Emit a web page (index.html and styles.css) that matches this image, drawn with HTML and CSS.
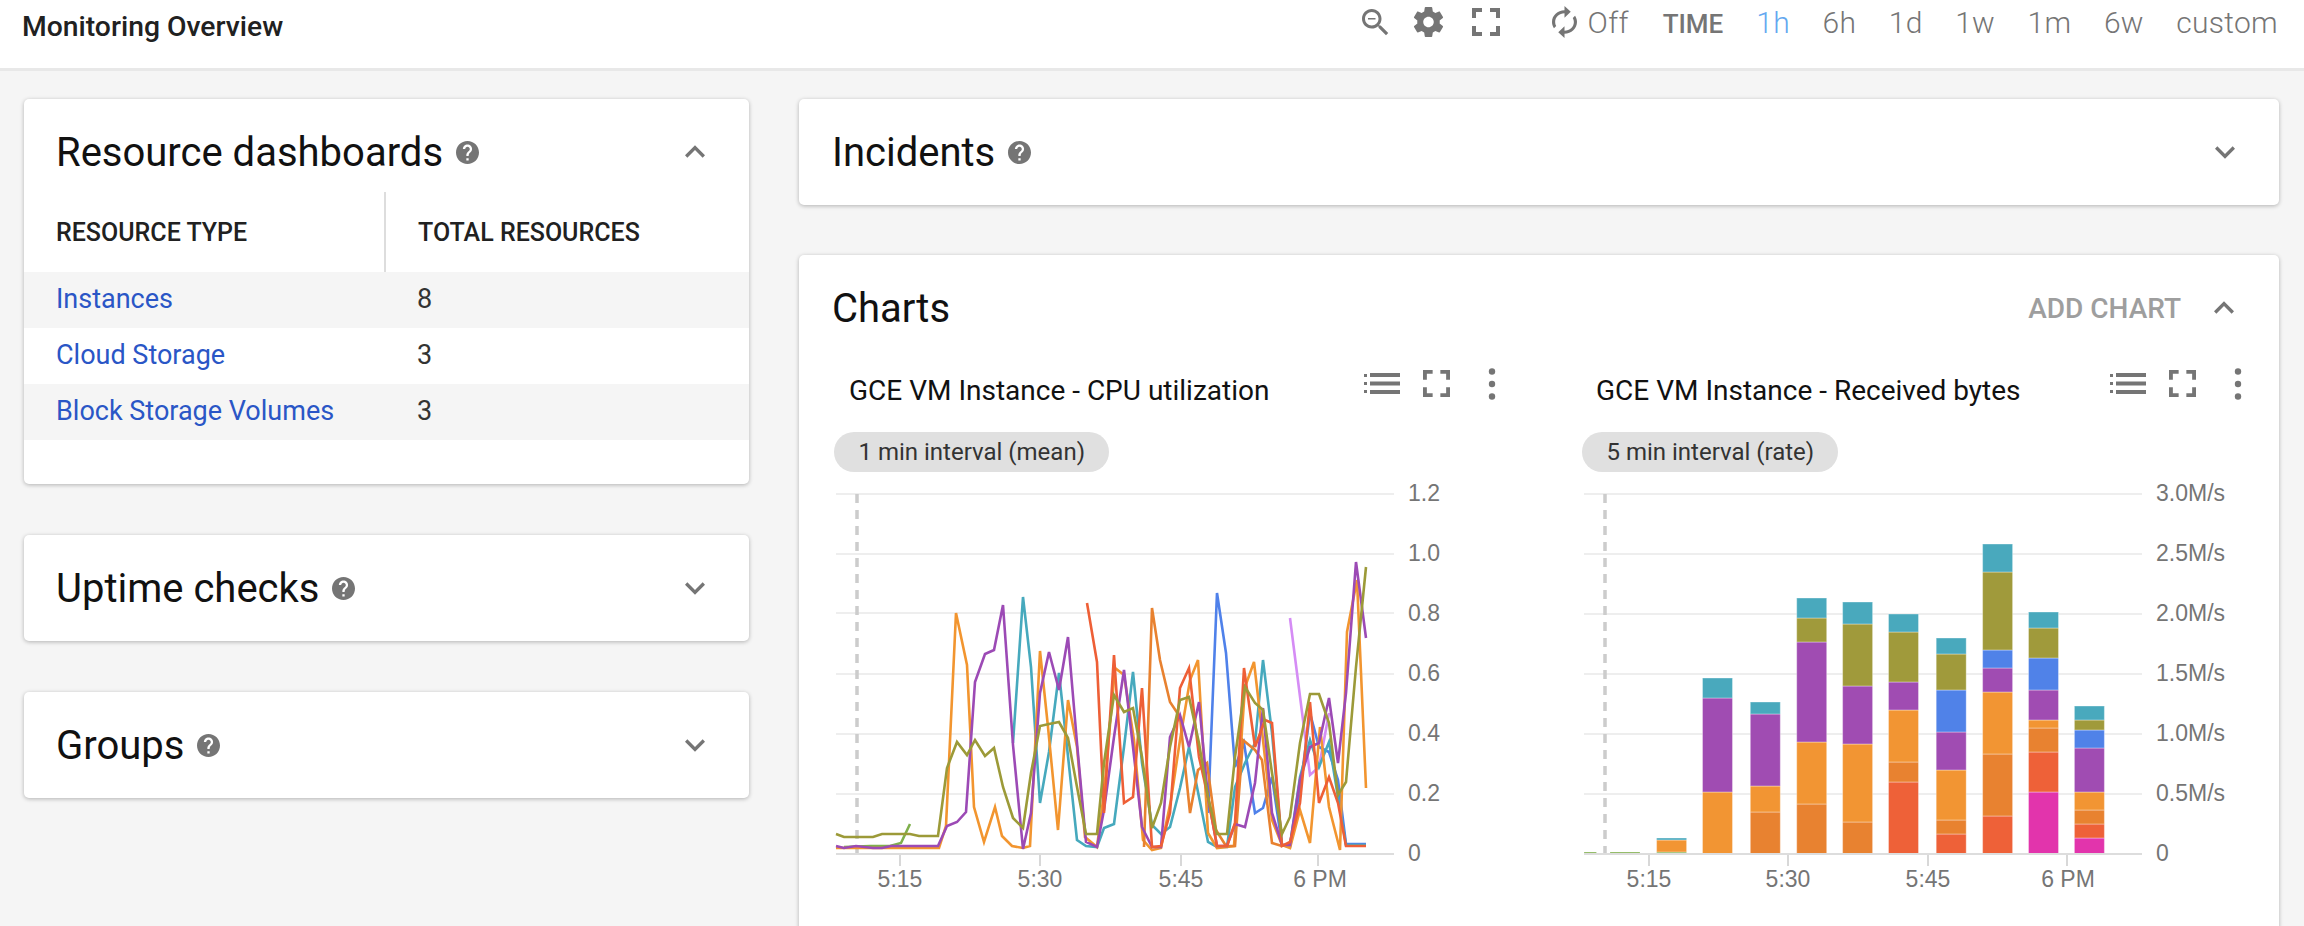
FILE: index.html
```html
<!DOCTYPE html>
<html lang="en">
<head>
<meta charset="UTF-8" />
<title>Monitoring Overview</title>
<link rel="stylesheet" href="styles.css">
</head>
<body>

<!-- Icon sprite -->
<svg class="sprite" aria-hidden="true">
  <symbol id="i-help" viewBox="2 2 20 20"><path d="M12 2C6.48 2 2 6.48 2 12s4.48 10 10 10 10-4.48 10-10S17.52 2 12 2zm1 17h-2v-2h2v2zm2.07-7.75l-.9.92C13.45 12.9 13 13.5 13 15h-2v-.5c0-1.1.45-2.1 1.17-2.83l1.24-1.26c.37-.36.59-.86.59-1.41 0-1.1-.9-2-2-2s-2 .9-2 2H8c0-2.21 1.79-4 4-4s4 1.79 4 4c0 .88-.36 1.68-.93 2.25z"/></symbol>
  <symbol id="i-less" viewBox="0 0 24 24"><path d="M12 8l-6 6 1.41 1.41L12 10.83l4.59 4.58L18 14z"/></symbol>
  <symbol id="i-more" viewBox="0 0 24 24"><path d="M16.59 8.59L12 13.17 7.41 8.59 6 10l6 6 6-6z"/></symbol>
  <symbol id="i-zoom" viewBox="3 3 18 18"><path d="M15.5 14h-.79l-.28-.27C15.41 12.59 16 11.11 16 9.5 16 5.91 13.09 3 9.5 3S3 5.91 3 9.5 5.91 16 9.5 16c1.61 0 3.09-.59 4.23-1.57l.27.28v.79l5 4.99L20.49 19l-4.99-5zm-6 0C7.01 14 5 11.99 5 9.5S7.01 5 9.5 5 14 7.01 14 9.5 11.99 14 9.5 14zM7 9h5v1H7z"/></symbol>
  <symbol id="i-gear" viewBox="2.4 2 19.2 20"><path d="M19.43 12.98c.04-.32.07-.64.07-.98s-.03-.66-.07-.98l2.11-1.65c.19-.15.24-.42.12-.64l-2-3.46c-.12-.22-.39-.3-.61-.22l-2.49 1c-.52-.4-1.08-.73-1.69-.98l-.38-2.65C14.46 2.18 14.25 2 14 2h-4c-.25 0-.46.18-.49.42l-.38 2.65c-.61.25-1.17.59-1.69.98l-2.49-1c-.23-.09-.49 0-.61.22l-2 3.46c-.13.22-.07.49.12.64l2.11 1.65c-.04.32-.07.65-.07.98s.03.66.07.98l-2.11 1.65c-.19.15-.24.42-.12.64l2 3.46c.12.22.39.3.61.22l2.49-1c.52.4 1.08.73 1.69.98l.38 2.65c.03.24.24.42.49.42h4c.25 0 .46-.18.49-.42l.38-2.65c.61-.25 1.17-.59 1.69-.98l2.49 1c.23.09.49 0 .61-.22l2-3.46c.12-.22.07-.49-.12-.64l-2.11-1.65zM12 15.5c-1.93 0-3.5-1.57-3.5-3.5s1.57-3.5 3.5-3.5 3.5 1.57 3.5 3.5-1.57 3.5-3.5 3.5z"/></symbol>
  <symbol id="i-full" viewBox="5 5 14 14"><path d="M7 14H5v5h5v-2H7v-3zm-2-4h2V7h3V5H5v5zm12 7h-3v2h5v-5h-2v3zM14 5v2h3v3h2V5h-5z"/></symbol>
  <symbol id="i-renew" viewBox="4 1 16 22" preserveAspectRatio="none"><path d="M12 6v3l4-4-4-4v3c-4.42 0-8 3.58-8 8 0 1.57.46 3.03 1.24 4.26L6.7 14.8c-.45-.83-.7-1.79-.7-2.8 0-3.31 2.69-6 6-6zm6.76 1.74L17.3 9.2c.44.84.7 1.79.7 2.8 0 3.31-2.69 6-6 6v-3l-4 4 4 4v-3c4.42 0 8-3.58 8-8 0-1.57-.46-3.03-1.24-4.26z"/></symbol>
  <symbol id="i-list" viewBox="0 0 36 21"><path d="M0 1h3v3H0zM6 0h30v4H6zM0 9h3v3H0zM6 8.5h30v4H6zM0 17h3v3H0zM6 17h30v4H6z"/></symbol>
  <symbol id="i-dots" viewBox="0 0 12 32"><circle cx="6" cy="3.5" r="3.2"/><circle cx="6" cy="16" r="3.2"/><circle cx="6" cy="28.5" r="3.2"/></symbol>
</svg>

<header class="topbar">
  <h1 class="page-title">Monitoring Overview</h1>
  <div class="tools">
    <svg class="tool tool-zoom"><use href="#i-zoom"/></svg>
    <svg class="tool tool-gear"><use href="#i-gear"/></svg>
    <svg class="tool tool-full"><use href="#i-full"/></svg>
    <svg class="tool tool-renew"><use href="#i-renew"/></svg>
    <span class="range range-off">Off</span>
    <span class="time-label">TIME</span>
    <span class="range range-active">1h</span>
    <span class="range">6h</span>
    <span class="range">1d</span>
    <span class="range">1w</span>
    <span class="range">1m</span>
    <span class="range">6w</span>
    <span class="range">custom</span>
  </div>
</header>

<main class="layout">
  <div class="col-left">
    <section class="card card-open">
      <div class="card-head">
        <h2>Resource dashboards</h2>
        <svg class="help"><use href="#i-help"/></svg>
        <svg class="chev"><use href="#i-less"/></svg>
      </div>
      <table class="res-table">
        <thead>
          <tr><th>RESOURCE TYPE</th><th>TOTAL RESOURCES</th></tr>
        </thead>
        <tbody>
          <tr><td><a href="#">Instances</a></td><td>8</td></tr>
          <tr><td><a href="#">Cloud Storage</a></td><td>3</td></tr>
          <tr><td><a href="#">Block Storage Volumes</a></td><td>3</td></tr>
        </tbody>
      </table>
    </section>

    <section class="card">
      <div class="card-head">
        <h2>Uptime checks</h2>
        <svg class="help"><use href="#i-help"/></svg>
        <svg class="chev"><use href="#i-more"/></svg>
      </div>
    </section>

    <section class="card">
      <div class="card-head">
        <h2>Groups</h2>
        <svg class="help"><use href="#i-help"/></svg>
        <svg class="chev"><use href="#i-more"/></svg>
      </div>
    </section>
  </div>

  <div class="col-right">
    <section class="card">
      <div class="card-head">
        <h2>Incidents</h2>
        <svg class="help"><use href="#i-help"/></svg>
        <svg class="chev"><use href="#i-more"/></svg>
      </div>
    </section>

    <section class="card card-charts">
      <div class="card-head">
        <h2>Charts</h2>
        <span class="add-chart">ADD CHART</span>
        <svg class="chev"><use href="#i-less"/></svg>
      </div>

      <div class="charts">
        <!-- CPU utilization -->
        <div class="chart chart-cpu">
          <div class="chart-head">
            <h3>GCE VM Instance - CPU utilization</h3>
            <svg class="ci-list"><use href="#i-list"/></svg>
            <svg class="ci-full"><use href="#i-full"/></svg>
            <svg class="ci-dots"><use href="#i-dots"/></svg>
          </div>
          <span class="pill">1 min interval (mean)</span>
          <svg class="plot plot-cpu" viewBox="834 480 744 446">
            <g class="grid">
              <path d="M836 494H1394M836 554H1394M836 613H1394M836 674H1394M836 734H1394M836 794H1394"/>
            </g>
            <path class="marker" d="M857 494V854"/>
            <path class="axis" d="M836 854H1394"/>
            <path class="tick" d="M900 855V866M1040 855V866M1181 855V866M1318 855V866"/>
            <g class="ylab">
              <text x="1408" y="501">1.2</text>
              <text x="1408" y="561">1.0</text>
              <text x="1408" y="621">0.8</text>
              <text x="1408" y="681">0.6</text>
              <text x="1408" y="741">0.4</text>
              <text x="1408" y="801">0.2</text>
              <text x="1408" y="861">0</text>
            </g>
            <g class="xlab">
              <text x="900" y="887">5:15</text>
              <text x="1040" y="887">5:30</text>
              <text x="1181" y="887">5:45</text>
              <text x="1320" y="887">6 PM</text>
            </g>
            <g class="lines">
              <polyline class="l-green" points="844,847 870,846 890,846 901,843 910,824"/>
              <polyline class="l-lilac" points="1290,618 1310,775 1319,767 1329,713"/>
              <polyline class="l-blue" points="1208,813 1217,593 1226,653 1235,767 1244,743 1255,813 1263,808 1272,777 1282,845 1290,847 1300,790 1310,713 1319,747 1329,752 1338,780 1346,844 1366,844"/>
              <polyline class="l-teal" points="1013,743 1023,597 1031,667 1040,803 1049,752 1059,673 1067,747 1077,840 1086,846 1097,847 1104,828 1114,824 1124,747 1133,672 1142,763 1152,825 1161,834 1170,827 1180,788 1189,747 1199,797 1208,842 1217,847 1227,847 1235,787 1245,763 1255,743 1263,660 1272,733 1282,845 1290,845 1300,777 1310,740 1319,767 1329,742 1338,797 1346,845 1366,845"/>
              <polyline class="l-orange" points="836,848 939,848 946,826 956,613 967,665 974,807 984,842 995,807 1002,836 1012,846 1023,848 1030,846 1040,651 1048,727 1058,830 1068,700 1077,747 1085,837 1097,847 1104,793 1115,668 1124,675 1134,740 1143,840 1152,850 1161,848 1171,800 1180,740 1190,680 1198,660 1208,833 1217,848 1234,846 1245,687 1254,662 1263,740 1272,820 1282,845 1290,848 1300,810 1310,843 1320,727 1329,807 1340,850 1347,632 1357,580 1366,788"/>
              <polyline class="l-dkorange" points="1144,847 1152,608 1160,660 1170,702 1180,717 1190,813 1198,770 1207,763 1216,830 1226,846 1235,846 1243,740 1255,750 1262,760 1272,843 1282,846"/>
              <polyline class="l-purple" points="836,846 844,848 856,846 873,848 882,848 891,846 938,846 947,826 957,822 966,812 975,682 985,654 994,650 1003,605 1013,745 1023,849 1031,813 1040,693 1049,652 1059,690 1068,637 1077,743 1086,842 1097,847 1104,810 1114,737 1124,670 1133,747 1142,827 1152,847 1161,847 1170,737 1180,715 1189,747 1199,702 1208,797 1217,846 1227,846 1235,824 1245,827 1255,783 1263,708 1272,813 1282,845 1290,845 1300,780 1310,747 1319,743 1329,698 1338,763 1346,693 1356,562 1366,638"/>
              <polyline class="l-red" points="1087,603 1097,662 1104,813 1114,655 1124,803 1133,797 1142,688 1152,847 1161,846 1170,813 1180,688 1189,668 1199,757 1208,797 1217,846 1227,846 1235,823 1244,668 1255,747 1265,720 1272,723 1282,846 1290,842 1300,803 1310,702 1319,803 1329,777 1338,803 1346,846 1366,846"/>
              <polyline class="l-olive" points="836,834 844,837 873,837 882,834 910,834 919,836 938,836 947,768 957,742 967,755 975,740 985,756 994,748 1003,787 1013,818 1023,828 1031,773 1040,726 1049,724 1059,722 1068,738 1077,787 1086,834 1097,834 1104,763 1114,695 1124,712 1133,708 1142,757 1152,828 1161,803 1170,747 1180,700 1189,697 1199,743 1208,797 1217,834 1227,834 1235,757 1245,687 1255,703 1263,710 1272,773 1282,834 1290,817 1300,743 1310,694 1319,694 1329,723 1338,795 1346,782 1356,667 1366,567"/>
            </g>
          </svg>
        </div>

        <!-- Received bytes -->
        <div class="chart chart-bytes">
          <div class="chart-head">
            <h3>GCE VM Instance - Received bytes</h3>
            <svg class="ci-list"><use href="#i-list"/></svg>
            <svg class="ci-full"><use href="#i-full"/></svg>
            <svg class="ci-dots"><use href="#i-dots"/></svg>
          </div>
          <span class="pill">5 min interval (rate)</span>
          <svg class="plot plot-bytes" viewBox="1582 480 696 446">
            <g class="grid">
              <path d="M1584 494H2142M1584 554H2142M1584 614H2142M1584 674H2142M1584 734H2142M1584 794H2142"/>
            </g>
            <path class="marker" d="M1605 494V854"/>
            <g class="bars">
              <rect class="s-green" x="1584" y="852" height="2" style="width:12.5px"/>
              <g transform="translate(1610 0)"><rect class="s-green" y="852" height="2"/></g>
              <g transform="translate(1656.6 0)">
                <rect class="s-green" y="852" height="2"/><rect class="s-orange" y="840" height="12"/><rect class="s-teal" y="838" height="2"/>
              </g>
              <g transform="translate(1702.5 0)">
                <rect class="s-orange" y="792" height="62"/><rect class="s-purple" y="698" height="94"/><rect class="s-teal" y="678" height="20"/>
              </g>
              <g transform="translate(1750.3 0)">
                <rect class="s-dkorange" y="812" height="42"/><rect class="s-orange" y="786" height="26"/><rect class="s-purple" y="714" height="72"/><rect class="s-teal" y="702" height="12"/>
              </g>
              <g transform="translate(1796.7 0)">
                <rect class="s-dkorange" y="804" height="50"/><rect class="s-orange" y="742" height="62"/><rect class="s-purple" y="642" height="100"/><rect class="s-olive" y="618" height="24"/><rect class="s-teal" y="598" height="20"/>
              </g>
              <g transform="translate(1842.6 0)">
                <rect class="s-dkorange" y="822" height="32"/><rect class="s-orange" y="744" height="78"/><rect class="s-purple" y="686" height="58"/><rect class="s-olive" y="624" height="62"/><rect class="s-teal" y="602" height="22"/>
              </g>
              <g transform="translate(1888.5 0)">
                <rect class="s-red" y="782" height="72"/><rect class="s-dkorange" y="762" height="20"/><rect class="s-orange" y="710" height="52"/><rect class="s-purple" y="682" height="28"/><rect class="s-olive" y="632" height="50"/><rect class="s-teal" y="614" height="18"/>
              </g>
              <g transform="translate(1936.2 0)">
                <rect class="s-red" y="834" height="20"/><rect class="s-dkorange" y="820" height="14"/><rect class="s-orange" y="770" height="50"/><rect class="s-purple" y="732" height="38"/><rect class="s-blue" y="690" height="42"/><rect class="s-olive" y="654" height="36"/><rect class="s-teal" y="638" height="16"/>
              </g>
              <g transform="translate(1982.6 0)">
                <rect class="s-red" y="816" height="38"/><rect class="s-dkorange" y="754" height="62"/><rect class="s-orange" y="692" height="62"/><rect class="s-purple" y="668" height="24"/><rect class="s-blue" y="650" height="18"/><rect class="s-olive" y="572" height="78"/><rect class="s-teal" y="544" height="28"/>
              </g>
              <g transform="translate(2028.5 0)">
                <rect class="s-magenta" y="792" height="62"/><rect class="s-red" y="752" height="40"/><rect class="s-dkorange" y="728" height="24"/><rect class="s-orange" y="720" height="8"/><rect class="s-purple" y="690" height="30"/><rect class="s-blue" y="658" height="32"/><rect class="s-olive" y="628" height="30"/><rect class="s-teal" y="612" height="16"/>
              </g>
              <g transform="translate(2074.4 0)">
                <rect class="s-magenta" y="838" height="16"/><rect class="s-red" y="824" height="14"/><rect class="s-dkorange" y="810" height="14"/><rect class="s-orange" y="792" height="18"/><rect class="s-purple" y="748" height="44"/><rect class="s-blue" y="730" height="18"/><rect class="s-olive" y="720" height="10"/><rect class="s-teal" y="706" height="14"/>
              </g>
            </g>
            <path class="axis" d="M1584 854H2142"/>
            <path class="tick" d="M1649 855V866M1788 855V866M1928 855V866M2067 855V866"/>
            <g class="ylab">
              <text x="2156" y="501">3.0M/s</text>
              <text x="2156" y="561">2.5M/s</text>
              <text x="2156" y="621">2.0M/s</text>
              <text x="2156" y="681">1.5M/s</text>
              <text x="2156" y="741">1.0M/s</text>
              <text x="2156" y="801">0.5M/s</text>
              <text x="2156" y="861">0</text>
            </g>
            <g class="xlab">
              <text x="1649" y="887">5:15</text>
              <text x="1788" y="887">5:30</text>
              <text x="1928" y="887">5:45</text>
              <text x="2068" y="887">6 PM</text>
            </g>
          </svg>
        </div>
      </div>
    </section>
  </div>
</main>

</body>
</html>
```

FILE: styles.css
```css
/* Basic Reset */
* {
  margin: 0; padding: 0; box-sizing: border-box;
}
html, body {
  height: 926px;
  overflow: hidden;
}
body {
  font-family: Roboto, 'Liberation Sans', sans-serif;
  background: #f5f5f5;
  color: #212121;
}
.sprite {
  display: none;
}
svg {
  fill: #757575;
  flex: none;
}
/* Top bar */
.topbar {
  height: 71px;
  background: #fff;
  border-bottom: 3px solid #e8e8e8;
  display: flex;
  justify-content: space-between;
  padding: 0 26px 0 22px;
}
.page-title {
  font-size: 28.3px;
  font-weight: 500;
  line-height: 53px;
}
.tools {
  display: flex;
  align-items: center;
  height: 44px;
  color: #757575;
}
.tool-zoom { width: 27px; height: 27px; }
.tool-gear { width: 31px; height: 30px; margin-left: 24px; }
.tool-full { width: 28px; height: 28px; margin-left: 28px; }
.tool-renew { width: 25px; height: 32px; margin-left: 52px; }
.range {
  font-size: 30px;
  font-weight: 300;
  letter-spacing: 0.3px;
  margin-left: 32.5px;
}
.range-off { margin-left: 11px; }
.range-active { color: #64a8f0; margin-left: 33px; }
.time-label {
  font-size: 26px;
  font-weight: 500;
  margin: 3px 0 0 34px;
}
/* Page columns */
.layout {
  display: grid;
  grid-template-columns: 725px 1480px;
  column-gap: 50px;
  padding: 28px 25px 0 24px;
}
.col-left, .col-right {
  display: flex;
  flex-direction: column;
  gap: 50px;
}
.col-left {
  gap: 51px;
}
.card {
  background: #fff;
  border-radius: 5px;
  box-shadow: 0 1px 4px rgba(0,0,0,0.28);
}
.card-head {
  height: 106px;
  display: flex;
  align-items: center;
  padding: 0 34px 0 32px;
}
.col-right .card-head {
  padding-left: 33px;
}
.card-head h2 {
  font-size: 40px;
  font-weight: 400;
  color: #111;
}
.help {
  width: 23px;
  height: 23px;
  margin-left: 13px;
}
.chev {
  width: 40px;
  height: 40px;
  margin-left: auto;
}
.add-chart {
  font-size: 28px;
  font-weight: 500;
  color: #9e9e9e;
  margin-left: auto;
}
.add-chart + .chev {
  margin-left: 23px;
  margin-right: 1px;
}
/* Resource table */
.card-open {
  height: 385px;
}
.card-open .card-head {
  height: 93px;
  padding-top: 13px;
}
.res-table {
  width: 100%;
  border-collapse: collapse;
  table-layout: fixed;
}
.res-table th {
  height: 80px;
  text-align: left;
  font-size: 25px;
  font-weight: 500;
  padding-left: 32px;
}
.res-table th:first-child {
  width: 361px;
  border-right: 2px solid #ddd;
}
.res-table td {
  height: 56px;
  font-size: 27px;
  padding: 0 0 2px 32px;
  color: #333;
}
.res-table tbody tr:nth-child(odd) {
  background: #f5f5f5;
}
.res-table a {
  color: #2a56c6;
  text-decoration: none;
}
/* Charts */
.card-charts {
  height: 700px;
}
.charts {
  display: grid;
  grid-template-columns: 748px 696px;
  padding-left: 35px;
}
.chart-head {
  height: 71px;
  display: flex;
  padding: 0 0 0 15px;
  align-items: flex-start;
}
.chart-head h3 {
  font-size: 28px;
  font-weight: 400;
  color: #111;
  line-height: 60px;
}
.ci-list { width: 36px; height: 21px; margin: 12px 0 0 auto; }
.ci-full { width: 27px; height: 27px; margin: 9px 0 0 23px; }
.ci-dots { width: 12px; height: 32px; margin: 7px 0 0 36px; }
.chart-cpu .chart-head { padding-right: 84px; }
.chart-bytes .chart-head { padding: 0 34px 0 14px; }
.pill {
  display: inline-block;
  height: 40px;
  line-height: 40px;
  padding: 0 23.5px 0 24.5px;
  border-radius: 20px;
  background: #e0e0e0;
  font-size: 24px;
  color: #333;
}
.plot {
  display: block;
  margin-top: 8px;
  width: 100%;
  height: 446px;
  fill: none;
}
.chart-cpu .plot { width: 744px; }
.grid path { stroke: #eee; stroke-width: 2; }
.axis { stroke: #ddd; stroke-width: 2; }
.tick { stroke: #ccc; stroke-width: 1.5; }
.marker { stroke: #ccc; stroke-width: 3.5; stroke-dasharray: 9 7; }
.ylab text, .xlab text {
  font-family: 'Liberation Sans', Arial, sans-serif;
  font-size: 23px;
  fill: #757575;
}
.xlab text { text-anchor: middle; }
.lines polyline {
  fill: none;
  stroke-width: 2.6;
  stroke-linejoin: miter;
}
.l-green { stroke: #7fb04c; }
.l-lilac { stroke: #d58cf5; }
.l-blue { stroke: #4f81ea; }
.l-teal { stroke: #46a9bd; }
.l-orange { stroke: #f2952f; }
.l-dkorange { stroke: #e8812f; }
.l-purple { stroke: #9c4ab5; }
.l-red { stroke: #ee5f36; }
.l-olive { stroke: #9c9a38; }
.bars rect {
  width: 30px;
  stroke: rgba(255,255,255,0.35);
  stroke-width: 1;
}
.s-green { fill: #7fb04c; }
.s-blue { fill: #5082e8; }
.s-teal { fill: #49a9bd; }
.s-orange { fill: #f29533; }
.s-dkorange { fill: #e88230; }
.s-purple { fill: #a04cb2; }
.s-red { fill: #ee6138; }
.s-olive { fill: #a09a3b; }
.s-magenta { fill: #e234ac; }
```
